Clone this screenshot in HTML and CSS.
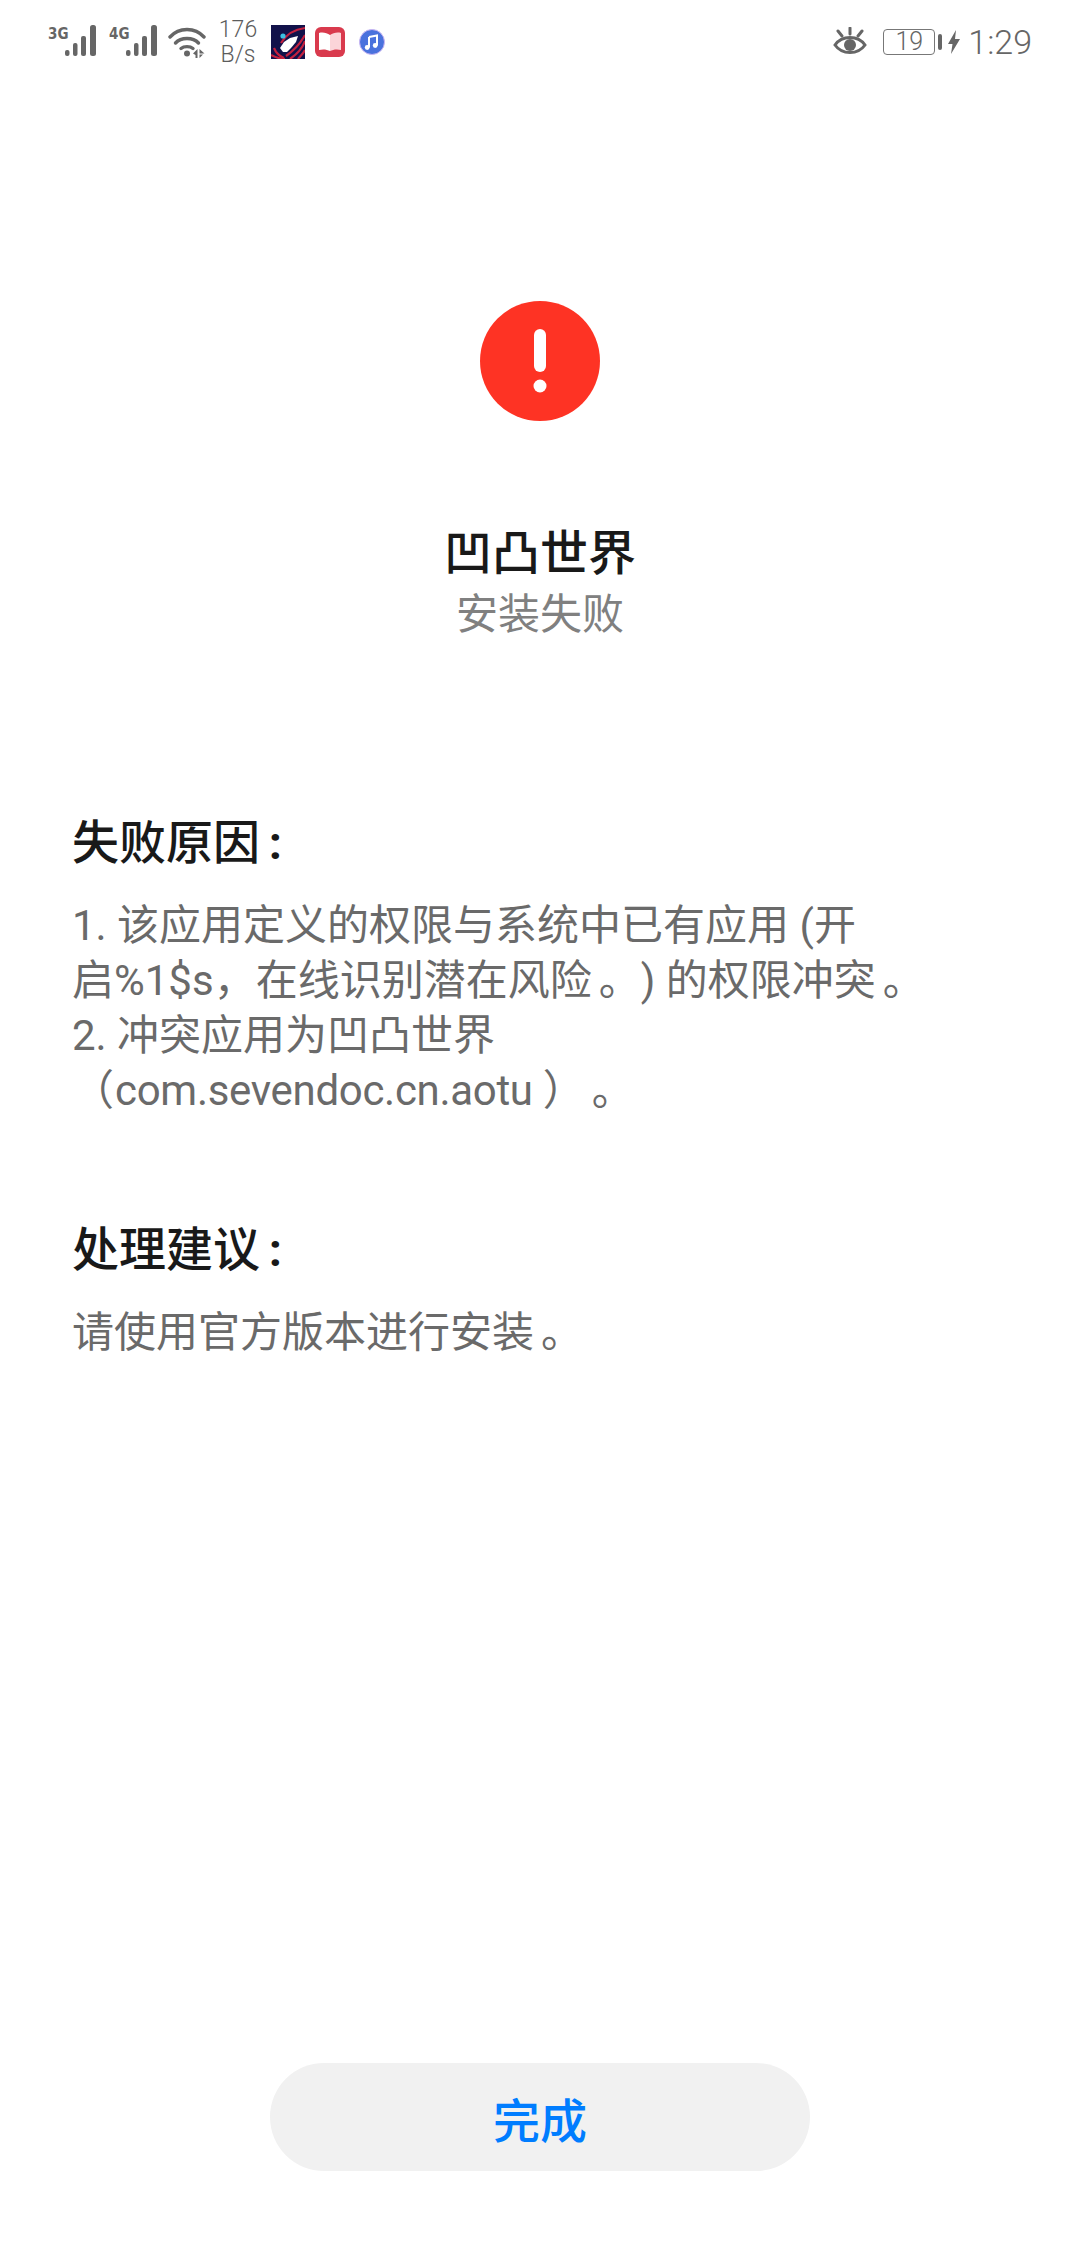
FILE: index.html
```html
<!DOCTYPE html>
<html lang="zh-CN">
<head>
    <meta charset="UTF-8">
    <title>安装失败</title>
    <link rel="stylesheet" href="styles.css">
</head>
<body>
<div class="page">
    <div class="status-bar">
        <div class="status-left">
            <svg class="signal" width="52" height="34" viewBox="0 0 52 34">
                <text class="net-type" x="0" y="14">3G</text>
                <g fill="#666">
                    <rect x="17" y="25" width="4.5" height="6" rx="2"/>
                    <rect x="25" y="18" width="4.5" height="13" rx="2"/>
                    <rect x="33" y="11" width="5" height="20" rx="2"/>
                    <rect x="42" y="0" width="6" height="31" rx="2.5"/>
                </g>
            </svg>
            <svg class="signal" width="52" height="34" viewBox="0 0 52 34">
                <text class="net-type" x="0" y="14">4G</text>
                <g fill="#666">
                    <rect x="17" y="25" width="4.5" height="6" rx="2"/>
                    <rect x="25" y="18" width="4.5" height="13" rx="2"/>
                    <rect x="33" y="11" width="5" height="20" rx="2"/>
                    <rect x="42" y="0" width="6" height="31" rx="2.5"/>
                </g>
            </svg>
            <svg class="wifi" width="38" height="32" viewBox="0 0 38 32">
                <g fill="none" stroke="#666" stroke-width="3.4" stroke-linecap="round">
                    <path d="M2 11 C11 1 27 1 36 11"/>
                    <path d="M7.5 17 C13 11 25 11 30.5 17"/>
                    <path d="M13 22.5 C16 20 22 20 25 22.5"/>
                </g>
                <circle cx="19" cy="27.5" r="3" fill="#666"/>
                <path d="M29.5 23 V32 H27.5 V29 L25 27.5 Z M31.5 23 L36.5 27.5 H31.5 Z M31.5 32 V28.5 H35 Z" fill="#666"/>
            </svg>
            <div class="speed"><span>176</span><span>B/s</span></div>
            <svg class="app-icon" width="34" height="34" viewBox="0 0 34 34">
                <rect width="34" height="34" fill="#12124a"/>
                <g fill="none" stroke="#c4213f" stroke-width="2.2">
                    <path d="M34 3 C26 4 16 8 10 18"/>
                    <path d="M34 10 C31 15 28 22 15 31"/>
                    <path d="M34 16 C32 22 26 29 19 34"/>
                    <path d="M34 25 C32 29 29 31 27 34"/>
                    <path d="M0 30 C6 33 10 34 14 34"/>
                    <path d="M3 23 C5 28 8 31 13 33"/>
                </g>
                <path d="M12 27 L9 23 L13 17 L19 13 L27 11 L25 17 L20 23 L16 27 Z" fill="#fff"/>
                <circle cx="12" cy="11" r="2.6" fill="#3cc0e0"/>
            </svg>
            <svg class="app-icon" width="30" height="30" viewBox="0 0 30 30">
                <rect width="30" height="30" rx="6" fill="#d93a4d"/>
                <path d="M4 6 C8 5 12 6 15 8 V24 C12 22.5 8 22 4 23 Z" fill="#fff"/>
                <path d="M15 8 C18 6 22 5 26 6 V23 C22 22 18 22.5 15 24 Z" fill="#fbd5d9"/>
            </svg>
            <svg class="app-icon music" width="26" height="26" viewBox="0 0 26 26">
                <circle cx="13" cy="13" r="12.5" fill="#4a72dd" stroke="#c9b5f2" stroke-width="1"/>
                <path d="M10 8 L18 6.5 V16.5" fill="none" stroke="#fff" stroke-width="2"/>
                <path d="M10 8 V18.5" fill="none" stroke="#fff" stroke-width="2"/>
                <circle cx="8.2" cy="18.5" r="2.4" fill="#fff"/>
                <circle cx="16.2" cy="16.5" r="2.4" fill="#fff"/>
            </svg>
        </div>
        <div class="status-right">
            <svg class="eye" width="34" height="30" viewBox="0 0 34 30">
                <path d="M2 18 C9 8 25 8 32 18 C25 28 9 28 2 18 Z" fill="none" stroke="#666" stroke-width="3"/>
                <circle cx="17" cy="18" r="6" fill="#666"/>
                <path d="M17 1 V7 M5 4 L9 9 M29 4 L25 9" stroke="#666" stroke-width="3" stroke-linecap="round"/>
            </svg>
            <div class="battery"><span class="battery-level">19</span></div>
            <div class="battery-cap"></div>
            <svg class="bolt" width="12" height="24" viewBox="0 0 12 24">
                <path d="M8 0 L0 14 H4.5 L3 24 L12 9 H7 Z" fill="#666"/>
            </svg>
            <span class="clock">1:29</span>
        </div>
    </div>

    <div class="result-head">
        <svg class="alert-icon" width="120" height="120" viewBox="0 0 120 120">
            <circle cx="60" cy="60" r="60" fill="#fe3324"/>
            <rect x="54" y="28" width="12" height="43" rx="6" fill="#fff"/>
            <circle cx="60" cy="85" r="6.5" fill="#fff"/>
        </svg>
        <h1 class="app-name">凹凸世界</h1>
        <div class="result-text">安装失败</div>
    </div>

    <div class="details">
        <h2 class="section-title">失败原因 <span class="colon">:</span></h2>
        <p class="section-body">1. 该应用定义的权限与系统中已有应用 (开<br>启%1$s，在线识别潜在风险<span class="stop">。</span>) 的权限冲突<span class="stop">。</span><br>2. 冲突应用为凹凸世界<br>（<span class="pkg">com.sevendoc.cn.aotu</span>）<span class="stop">。</span></p>
        <h2 class="section-title second">处理建议 <span class="colon">:</span></h2>
        <p class="section-body">请使用官方版本进行安装<span class="stop">。</span></p>
    </div>

    <button class="done-btn">完成</button>
</div>
</body>
</html>
```

FILE: styles.css
```css
* {
    box-sizing: border-box;
}

body {
    margin: 0;
    background-color: #fff;
    font-family: Roboto, "Noto Sans CJK SC", sans-serif;
    text-spacing-trim: space-all;
}

.page {
    height: 2244px;
    display: flex;
    flex-direction: column;
    overflow: hidden;
}

.status-bar {
    display: flex;
    justify-content: space-between;
    align-items: center;
    height: 84px;
    padding: 0 48px 0 48px;
    color: #666;
}

.status-left,
.status-right {
    display: flex;
    align-items: center;
}

.signal {
    margin-right: 9px;
}

.net-type {
    font-family: "DejaVu Sans Condensed", "DejaVu Sans", sans-serif;
    font-size: 15px;
    font-weight: bold;
    fill: #666;
}

.wifi {
    margin-left: -2px;
}

.speed {
    display: flex;
    flex-direction: column;
    align-items: center;
    width: 46px;
    margin-left: 9px;
    font-size: 23px;
    font-weight: 300;
    line-height: 25px;
    color: #5c5c5c;
}

.app-icon {
    margin-left: 10px;
}

.music {
    margin-left: 14px;
}

.eye {
    margin-right: 16px;
}

.battery {
    display: flex;
    justify-content: center;
    align-items: center;
    width: 52px;
    height: 26px;
    border: 1.5px solid #777;
    border-radius: 4px;
}

.battery-level {
    font-size: 25px;
    font-weight: 300;
    line-height: 24px;
}

.battery-cap {
    width: 4px;
    height: 16px;
    margin-left: 3px;
    background-color: #666;
    border-radius: 2px;
}

.bolt {
    margin-left: 6px;
}

.clock {
    margin-left: 8px;
    font-size: 34px;
    font-weight: 300;
}

.result-head {
    display: flex;
    flex-direction: column;
    align-items: center;
    margin-top: 217px;
}

.app-name {
    margin: 101px 0 0;
    font-size: 48px;
    font-weight: 500;
    line-height: 64px;
    color: #191919;
}

.result-text {
    font-size: 42px;
    line-height: 58px;
    color: #808080;
}

.details {
    margin-top: 167px;
    padding: 0 72px;
}

.section-title {
    margin: 0;
    font-size: 47px;
    font-weight: 500;
    line-height: 64px;
    color: #191919;
}

.colon {
    margin-left: -3px;
    font-weight: 700;
}

.second {
    margin-top: 100px;
}

.section-body {
    margin: 23px 0 0;
    font-size: 42px;
    line-height: 55px;
    color: #6a6a6a;
}

.stop {
    margin-left: 7px;
}

.pkg {
    margin: 0 10px 0 1px;
    letter-spacing: -0.3px;
}

.done-btn {
    align-self: center;
    width: 540px;
    height: 108px;
    margin-top: auto;
    margin-bottom: 73px;
    border: none;
    border-radius: 54px;
    background-color: #f1f1f1;
    color: #007dff;
    font-family: inherit;
    font-size: 47px;
    font-weight: 500;
}
```
